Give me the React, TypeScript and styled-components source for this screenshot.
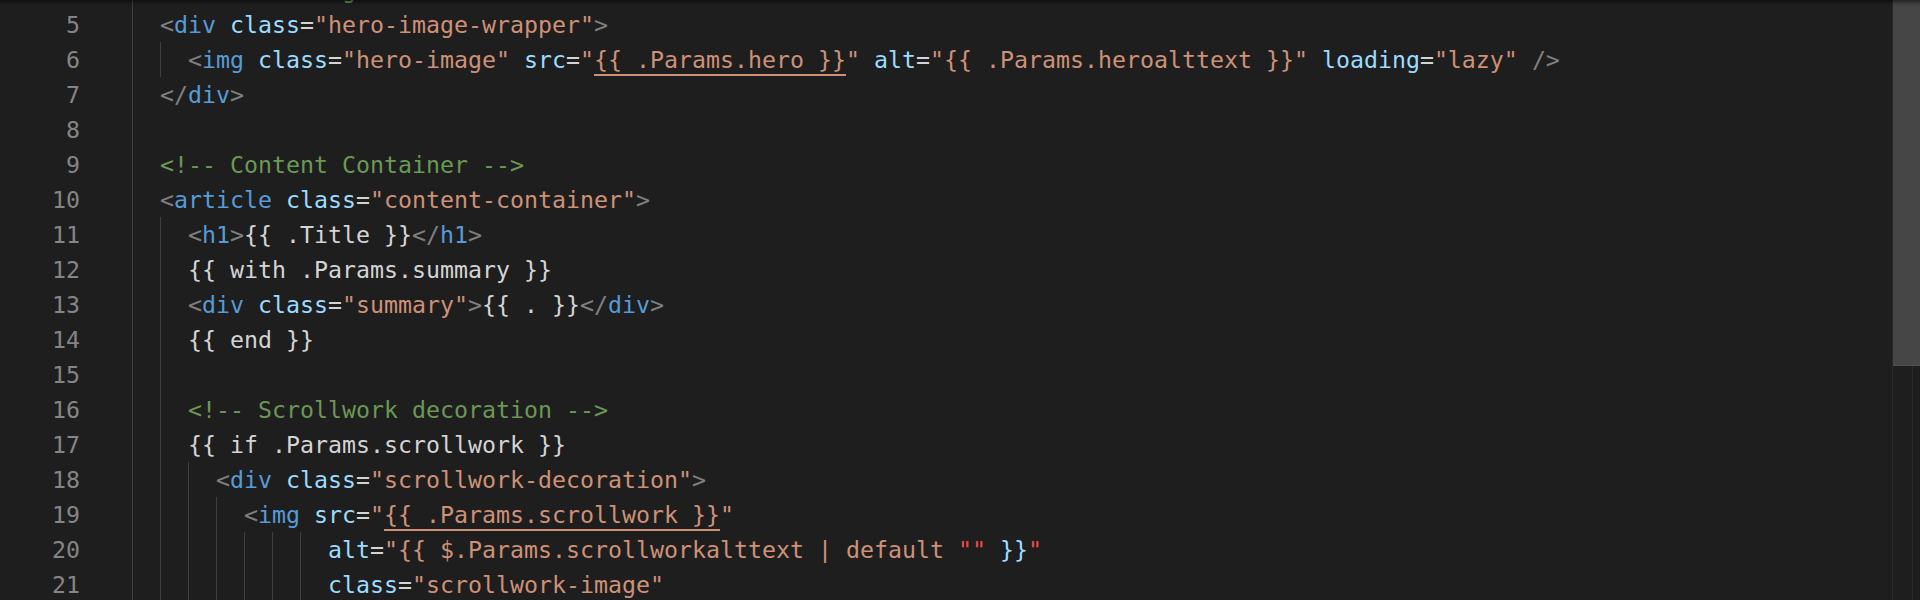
import React from "react";
import styled, { createGlobalStyle } from "styled-components";

const GlobalStyle = createGlobalStyle`
  html, body {
    margin: 0;
    padding: 0;
    background: #1e1e1e;
  }
`;

type Kind = "p" | "tag" | "attr" | "eq" | "str" | "link" | "comment" | "text" | "bad";
type Tok = [Kind, string];

interface LineData {
  n: number;
  indent: number;
  toks: Tok[];
}

const colors: Record<Kind, string> = {
  p: "#808080",
  tag: "#569cd6",
  attr: "#9cdcfe",
  eq: "#d4d4d4",
  str: "#ce9178",
  link: "#ce9178",
  comment: "#6a9955",
  text: "#d4d4d4",
  bad: "#f44747",
};

const lines: LineData[] = [
  { n: 4, indent: 1, toks: [["comment", "<!-- Hero image -->"]] },
  {
    n: 5,
    indent: 1,
    toks: [
      ["p", "<"], ["tag", "div"], ["text", " "], ["attr", "class"], ["eq", "="],
      ["str", "\"hero-image-wrapper\""], ["p", ">"],
    ],
  },
  {
    n: 6,
    indent: 2,
    toks: [
      ["p", "<"], ["tag", "img"], ["text", " "], ["attr", "class"], ["eq", "="],
      ["str", "\"hero-image\""], ["text", " "], ["attr", "src"], ["eq", "="],
      ["str", "\""], ["link", "{{ .Params.hero }}"], ["str", "\""], ["text", " "],
      ["attr", "alt"], ["eq", "="], ["str", "\"{{ .Params.heroalttext }}\""],
      ["text", " "], ["attr", "loading"], ["eq", "="], ["str", "\"lazy\""],
      ["text", " "], ["p", "/>"],
    ],
  },
  { n: 7, indent: 1, toks: [["p", "</"], ["tag", "div"], ["p", ">"]] },
  { n: 8, indent: 1, toks: [] },
  { n: 9, indent: 1, toks: [["comment", "<!-- Content Container -->"]] },
  {
    n: 10,
    indent: 1,
    toks: [
      ["p", "<"], ["tag", "article"], ["text", " "], ["attr", "class"], ["eq", "="],
      ["str", "\"content-container\""], ["p", ">"],
    ],
  },
  {
    n: 11,
    indent: 2,
    toks: [
      ["p", "<"], ["tag", "h1"], ["p", ">"], ["text", "{{ .Title }}"],
      ["p", "</"], ["tag", "h1"], ["p", ">"],
    ],
  },
  { n: 12, indent: 2, toks: [["text", "{{ with .Params.summary }}"]] },
  {
    n: 13,
    indent: 2,
    toks: [
      ["p", "<"], ["tag", "div"], ["text", " "], ["attr", "class"], ["eq", "="],
      ["str", "\"summary\""], ["p", ">"], ["text", "{{ . }}"], ["p", "</"],
      ["tag", "div"], ["p", ">"],
    ],
  },
  { n: 14, indent: 2, toks: [["text", "{{ end }}"]] },
  { n: 15, indent: 2, toks: [] },
  { n: 16, indent: 2, toks: [["comment", "<!-- Scrollwork decoration -->"]] },
  { n: 17, indent: 2, toks: [["text", "{{ if .Params.scrollwork }}"]] },
  {
    n: 18,
    indent: 3,
    toks: [
      ["p", "<"], ["tag", "div"], ["text", " "], ["attr", "class"], ["eq", "="],
      ["str", "\"scrollwork-decoration\""], ["p", ">"],
    ],
  },
  {
    n: 19,
    indent: 4,
    toks: [
      ["p", "<"], ["tag", "img"], ["text", " "], ["attr", "src"], ["eq", "="],
      ["str", "\""], ["link", "{{ .Params.scrollwork }}"], ["str", "\""],
    ],
  },
  {
    n: 20,
    indent: 7,
    toks: [
      ["attr", "alt"], ["eq", "="],
      ["str", "\"{{ $.Params.scrollworkalttext | default "], ["bad", "\"\""],
      ["text", " "], ["attr", "}}"], ["bad", "\""],
    ],
  },
  {
    n: 21,
    indent: 7,
    toks: [["attr", "class"], ["eq", "="], ["str", "\"scrollwork-image\""]],
  },
];

const Editor = styled.div`
  position: relative;
  display: flex;
  height: 600px;
  width: 1920px;
  overflow: hidden;
  background: #1e1e1e;
  font-family: "DejaVu Sans Mono", "Liberation Mono", monospace;
  font-size: 23.25px;

  &::before {
    content: "";
    position: absolute;
    left: 0;
    right: 0;
    top: 0;
    height: 8px;
    box-shadow: inset 0 6px 6px -6px #000;
    z-index: 2;
    pointer-events: none;
  }
`;

const Lines = styled.div`
  flex: 1;
  display: flex;
  flex-direction: column;
  margin-top: -28px;
`;

const Row = styled.div`
  display: flex;
  align-items: center;
  height: 35px;
  white-space: pre;
`;

const LineNo = styled.span`
  width: 80px;
  flex: none;
  text-align: right;
  color: #858585;
`;

const GutterGap = styled.span`
  width: 52px;
  flex: none;
`;

const Indent = styled.span`
  display: inline-block;
  flex: none;
  box-sizing: border-box;
  width: 28px;
  height: 35px;
  border-left: 1px solid #404040;
`;

const Tok = styled.span<{ $kind: Kind }>`
  color: ${(p) => colors[p.$kind]};
  ${(p) =>
    p.$kind === "link"
      ? `text-decoration: underline; text-decoration-color: #ce9178; text-decoration-thickness: 2px; text-underline-offset: 6px;`
      : ""}
`;

const ScrollTrack = styled.div`
  width: 28px;
  flex: none;
  box-sizing: border-box;
  border-left: 1px solid #2a2a2a;
  display: flex;
  flex-direction: column;
  background: linear-gradient(
    to right,
    transparent 0,
    transparent 19px,
    #2a2a2a 19px,
    #2a2a2a 20px,
    transparent 20px
  );
`;

const Thumb = styled.div`
  height: 365px;
  background: #464646;
  border-bottom: 1px solid #505050;
`;

export default function App() {
  return (
    <>
      <GlobalStyle />
      <Editor>
        <Lines>
          {lines.map((l) => (
            <Row key={l.n}>
              <LineNo>{l.n}</LineNo>
              <GutterGap />
              {Array.from({ length: l.indent }).map((_, i) => (
                <Indent key={i} />
              ))}
              {l.toks.map(([k, t], i) => (
                <Tok key={i} $kind={k}>
                  {t}
                </Tok>
              ))}
            </Row>
          ))}
        </Lines>
        <ScrollTrack>
          <Thumb />
        </ScrollTrack>
      </Editor>
    </>
  );
}
